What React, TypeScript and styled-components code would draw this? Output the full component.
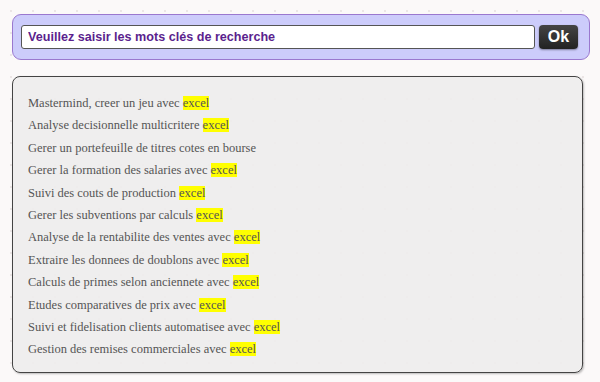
import React from 'react';
import styled, { createGlobalStyle } from 'styled-components';

const GlobalStyle = createGlobalStyle`
	html, body {
		margin: 0;
		padding: 0;
	}
	body {
		width: 600px;
		height: 382px;
		overflow: hidden;
		background-color: #fbf9f9;
		background-image: radial-gradient(circle, rgba(200, 185, 185, 0.3) 1px, transparent 1.5px);
		background-size: 22px 22px;
		font-family: "Liberation Sans", Arial, sans-serif;
	}
`;

const Page = styled.div`
	display: flex;
	flex-direction: column;
	gap: 16px;
	padding: 14px 10px 0 12px;
`;

const SearchBar = styled.form`
	display: flex;
	align-items: center;
	gap: 4px;
	height: 46px;
	box-sizing: border-box;
	padding: 0 11px 0 8px;
	background: #ccccfb;
	border: 1px solid #9a78cf;
	border-radius: 9px;
`;

const SearchInput = styled.input`
	flex: 1;
	height: 24px;
	box-sizing: border-box;
	padding: 0 6px;
	background: #fff;
	border: 1px solid #555;
	border-radius: 3px;
	font-family: "Liberation Sans", Arial, sans-serif;
	font-weight: bold;
	font-size: 12.6px;
	color: #5b1f8e;
	outline: none;
	&::placeholder {
		color: #5b1f8e;
		opacity: 1;
	}
`;

const OkButton = styled.button`
	width: 39px;
	height: 24px;
	padding: 0;
	border: none;
	border-radius: 4px;
	background: linear-gradient(#444, #222);
	box-shadow: 0 1px 2px rgba(0, 0, 0, 0.4);
	color: #fff;
	font-family: "Liberation Sans", Arial, sans-serif;
	font-weight: bold;
	font-size: 16px;
	cursor: pointer;
`;

const Results = styled.div`
	width: 571px;
	height: 297px;
	box-sizing: border-box;
	padding: 15px 0 5px 15px;
	background: rgba(238, 237, 237, 0.92);
	border: 1px solid #444;
	border-radius: 8px;
	box-shadow: 1px 1px 2px rgba(0, 0, 0, 0.25);
`;

const List = styled.ul`
	list-style: none;
	margin: 0;
	padding: 0;
	height: 275px;
	overflow: hidden;
`;

const Item = styled.li`
	height: 22.4px;
	line-height: 22.4px;
	font-family: "Liberation Serif", "Times New Roman", serif;
	font-size: 12.5px;
	color: #555;
	white-space: nowrap;
`;

const Mark = styled.span`
	background: #ffff00;
	color: #555;
`;

const results: { text: string; excel: boolean }[] = [
	{ text: 'Mastermind, creer un jeu avec', excel: true },
	{ text: 'Analyse decisionnelle multicritere', excel: true },
	{ text: 'Gerer un portefeuille de titres cotes en bourse', excel: false },
	{ text: 'Gerer la formation des salaries avec', excel: true },
	{ text: 'Suivi des couts de production', excel: true },
	{ text: 'Gerer les subventions par calculs', excel: true },
	{ text: 'Analyse de la rentabilite des ventes avec', excel: true },
	{ text: 'Extraire les donnees de doublons avec', excel: true },
	{ text: 'Calculs de primes selon anciennete avec', excel: true },
	{ text: 'Etudes comparatives de prix avec', excel: true },
	{ text: 'Suivi et fidelisation clients automatisee avec', excel: true },
	{ text: 'Gestion des remises commerciales avec', excel: true },
];

const App = () => (
	<>
		<GlobalStyle />
		<Page>
			<SearchBar onSubmit={(e) => e.preventDefault()}>
				<SearchInput placeholder="Veuillez saisir les mots clés de recherche" />
				<OkButton type="submit">Ok</OkButton>
			</SearchBar>
			<Results>
				<List>
					{results.map((r, i) => (
						<Item key={i}>
							{r.text}
							{r.excel && (
								<>
									{' '}
									<Mark>excel</Mark>
								</>
							)}
						</Item>
					))}
				</List>
			</Results>
		</Page>
	</>
);

export default App;
